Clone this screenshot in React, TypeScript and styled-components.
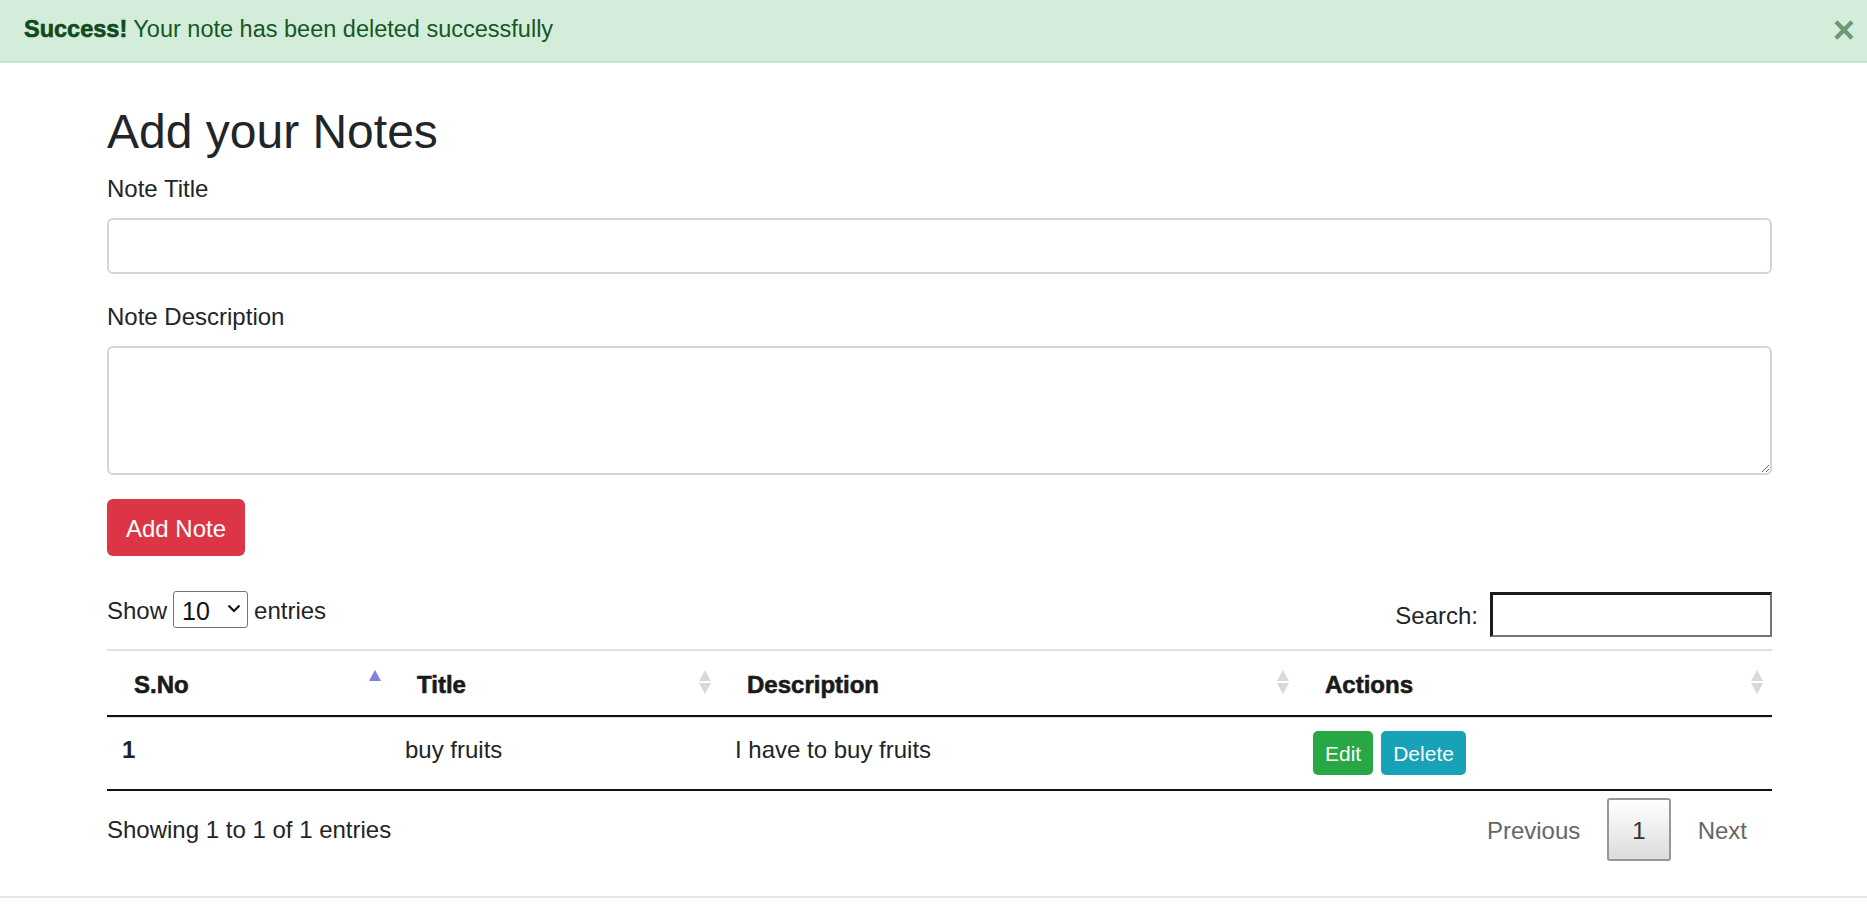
import React from 'react';
import styled, { createGlobalStyle } from 'styled-components';

const GlobalStyle = createGlobalStyle`
  * {
    box-sizing: border-box;
  }
  body {
    margin: 0;
    background: #fff;
    color: #212529;
    font-family: "Liberation Sans", Arial, sans-serif;
  }
`;

type SortState = 'asc' | 'both';

const columns: { label: string; width: number; sort: SortState }[] = [
  { label: 'S.No', width: 283, sort: 'asc' },
  { label: 'Title', width: 330, sort: 'both' },
  { label: 'Description', width: 578, sort: 'both' },
  { label: 'Actions', width: 474, sort: 'both' },
];

const notes = [{ id: 1, title: 'buy fruits', description: 'I have to buy fruits' }];

const SortIcon = ({ state }: { state: SortState }) => (
  <StyledSortIcon width="14" height="28" viewBox="0 0 14 28">
    {state === 'asc' ? (
      <polygon points="1,12 7,1 13,12" fill="#8181e0" />
    ) : (
      <>
        <polygon points="1,12 7,1 13,12" fill="#d9d9d9" />
        <polygon points="1,14 7,25 13,14" fill="#d9d9d9" />
      </>
    )}
  </StyledSortIcon>
);

const App = () => {
  return (
    <>
      <GlobalStyle />
      <StyledAlert role="alert">
        <span>
          <strong>Success!</strong> Your note has been deleted successfully
        </span>
        <StyledClose aria-label="Close">×</StyledClose>
      </StyledAlert>

      <StyledContainer>
        <StyledHeading>Add your Notes</StyledHeading>
        <form onSubmit={(e) => e.preventDefault()}>
          <StyledGroup>
            <StyledLabel htmlFor="title">Note Title</StyledLabel>
            <StyledInput id="title" type="text" />
          </StyledGroup>
          <StyledGroup>
            <StyledLabel htmlFor="desc">Note Description</StyledLabel>
            <StyledTextarea id="desc" rows={3} />
          </StyledGroup>
          <StyledAddButton type="submit">Add Note</StyledAddButton>
        </form>

        <StyledControls>
          <StyledLength>
            Show
            <StyledSelectWrap>
              <StyledSelect defaultValue="10">
                <option>10</option>
                <option>25</option>
                <option>50</option>
                <option>100</option>
              </StyledSelect>
              <StyledChevron width="14" height="9" viewBox="0 0 14 9">
                <path d="M1.5 1.5 L7 7 L12.5 1.5" fill="none" stroke="#111" strokeWidth="2.2" />
              </StyledChevron>
            </StyledSelectWrap>
            entries
          </StyledLength>
          <StyledSearch>
            Search:
            <StyledSearchInput type="search" />
          </StyledSearch>
        </StyledControls>

        <StyledTable>
          <colgroup>
            {columns.map((c) => (
              <col key={c.label} style={{ width: c.width }} />
            ))}
          </colgroup>
          <thead>
            <tr>
              {columns.map((c) => (
                <StyledTh key={c.label}>
                  {c.label}
                  <SortIcon state={c.sort} />
                </StyledTh>
              ))}
            </tr>
          </thead>
          <tbody>
            {notes.map((n) => (
              <tr key={n.id}>
                <StyledTd $bold>{n.id}</StyledTd>
                <StyledTd>{n.title}</StyledTd>
                <StyledTd>{n.description}</StyledTd>
                <StyledTd>
                  <StyledActionButton $variant="edit">Edit</StyledActionButton>
                  <StyledActionButton $variant="delete">Delete</StyledActionButton>
                </StyledTd>
              </tr>
            ))}
          </tbody>
        </StyledTable>

        <StyledTableFooter>
          <StyledInfo>Showing 1 to 1 of 1 entries</StyledInfo>
          <StyledPager>
            <StyledPageButton>Previous</StyledPageButton>
            <StyledPageButton $current>1</StyledPageButton>
            <StyledPageButton>Next</StyledPageButton>
          </StyledPager>
        </StyledTableFooter>
      </StyledContainer>
      <StyledPageEnd />
    </>
  );
};

export default App;

const StyledAlert = styled.div`
  display: flex;
  align-items: center;
  justify-content: space-between;
  height: 63px;
  padding: 0 6px 2px 24px;
  background: #d4edda;
  border-bottom: 2px solid #c3e6cb;
  color: #155724;
  font-size: 23.5px;

  strong {
    font-weight: 700;
    color: #0f4a1d;
    -webkit-text-stroke: 0.6px #0f4a1d;
  }
`;

const StyledClose = styled.button`
  background: none;
  border: 0;
  padding: 0 6px;
  color: #155724;
  opacity: 0.55;
  font-family: "Liberation Sans", Arial, sans-serif;
  font-size: 38px;
  font-weight: 700;
  line-height: 1;
  cursor: pointer;
`;

const StyledContainer = styled.main`
  width: 1665px;
  margin-left: 107px;
`;

const StyledHeading = styled.h2`
  margin: 40px 0 10px;
  font-size: 48px;
  font-weight: 400;
  line-height: 1.2;
  color: #212529;
`;

const StyledGroup = styled.div`
  margin-bottom: 25px;

  & + & {
    margin-bottom: 24px;
  }
`;

const StyledLabel = styled.label`
  display: block;
  margin-bottom: 11px;
  font-size: 24px;
  line-height: 36px;
`;

const fieldBase = `
  display: block;
  width: 100%;
  border: 2px solid #d2d6db;
  border-radius: 6px;
  background: #fff;
  font-family: "Liberation Sans", Arial, sans-serif;
  font-size: 24px;
  color: #495057;
  padding: 9px 18px;
  outline: none;
`;

const StyledInput = styled.input`
  ${fieldBase}
  height: 56px;
`;

const StyledTextarea = styled.textarea`
  ${fieldBase}
  height: 129px;
  resize: vertical;
`;

const StyledAddButton = styled.button`
  height: 57px;
  padding: 3px 19px 0;
  border: 0;
  border-radius: 6px;
  background: #dc3545;
  color: #fff;
  font-family: "Liberation Sans", Arial, sans-serif;
  font-size: 24px;
  cursor: pointer;
`;

const StyledControls = styled.div`
  display: flex;
  justify-content: space-between;
  align-items: flex-start;
  margin-top: 36px;
  font-size: 24px;
`;

const StyledLength = styled.label`
  display: flex;
  align-items: center;
  gap: 6px;
  height: 37px;
  padding-top: 1px;
  line-height: 36px;
`;

const StyledSelectWrap = styled.span`
  position: relative;
  display: inline-block;
  margin-top: -2px;
`;

const StyledSelect = styled.select`
  appearance: none;
  display: block;
  width: 75px;
  height: 37px;
  padding: 2px 0 0 8px;
  border: 1px solid #767676;
  border-radius: 3px;
  background: #fff;
  color: #111;
  font-family: "Liberation Sans", Arial, sans-serif;
  font-size: 25px;
`;

const StyledChevron = styled.svg`
  position: absolute;
  right: 7px;
  top: 13px;
  pointer-events: none;
`;

const StyledSearch = styled.label`
  display: flex;
  align-items: center;
  gap: 12px;
  height: 45px;
  padding-top: 4px;
`;

const StyledSearchInput = styled.input`
  width: 282px;
  height: 45px;
  margin-top: -4px;
  border-style: solid;
  border-width: 3px 2px 2px 3px;
  border-color: #1b1b1b #767676 #767676 #1b1b1b;
  background: #fff;
  font-size: 22px;
  outline: none;
`;

const StyledTable = styled.table`
  width: 100%;
  margin-top: 12px;
  border-collapse: separate;
  border-spacing: 0;
  table-layout: fixed;
  border-bottom: 2px solid #111;
  font-size: 24px;
`;

const StyledTh = styled.th`
  position: relative;
  padding: 16px 27px 12px;
  border-top: 2px solid #dee2e6;
  border-bottom: 2px solid #111;
  text-align: left;
  font-weight: 700;
  line-height: 36px;
  color: #1a1a1a;
  -webkit-text-stroke: 0.6px #1a1a1a;
`;

const StyledSortIcon = styled.svg`
  position: absolute;
  right: 8px;
  top: 50%;
  transform: translateY(-50%);
`;

const StyledTd = styled.td<{ $bold?: boolean }>`
  padding: 13px 15px 14px;
  border-top: 1px solid #dee2e6;
  vertical-align: top;
  line-height: 38px;
  font-weight: ${({ $bold }) => ($bold ? 700 : 400)};
  color: #212529;
`;

const StyledActionButton = styled.button<{ $variant: 'edit' | 'delete' }>`
  height: 44px;
  margin-right: 8px;
  padding: 2px 12px 0;
  border: 0;
  border-radius: 5px;
  background: ${({ $variant }) => ($variant === 'edit' ? '#28a745' : '#17a2b8')};
  color: #fff;
  font-family: "Liberation Sans", Arial, sans-serif;
  font-size: 21px;
  vertical-align: top;
  cursor: pointer;
`;

const StyledTableFooter = styled.div`
  display: flex;
  justify-content: space-between;
  align-items: flex-start;
  font-size: 24px;
`;

const StyledInfo = styled.div`
  padding-top: 21px;
  line-height: 36px;
`;

const StyledPager = styled.div`
  display: flex;
  gap: 2px;
  padding-top: 7px;
`;

const StyledPageButton = styled.span<{ $current?: boolean }>`
  padding: 13px 23px 10px;
  border: 2px solid ${({ $current }) => ($current ? '#979797' : 'transparent')};
  border-radius: 3px;
  background: ${({ $current }) => ($current ? 'linear-gradient(to bottom, #fff 0%, #dcdcdc 100%)' : 'transparent')};
  color: ${({ $current }) => ($current ? '#333' : '#666')};
  line-height: 36px;
  cursor: ${({ $current }) => ($current ? 'default' : 'pointer')};
`;

const StyledPageEnd = styled.div`
  height: 12px;
  margin-top: 35px;
  border-top: 2px solid #e6e6e6;
`;
